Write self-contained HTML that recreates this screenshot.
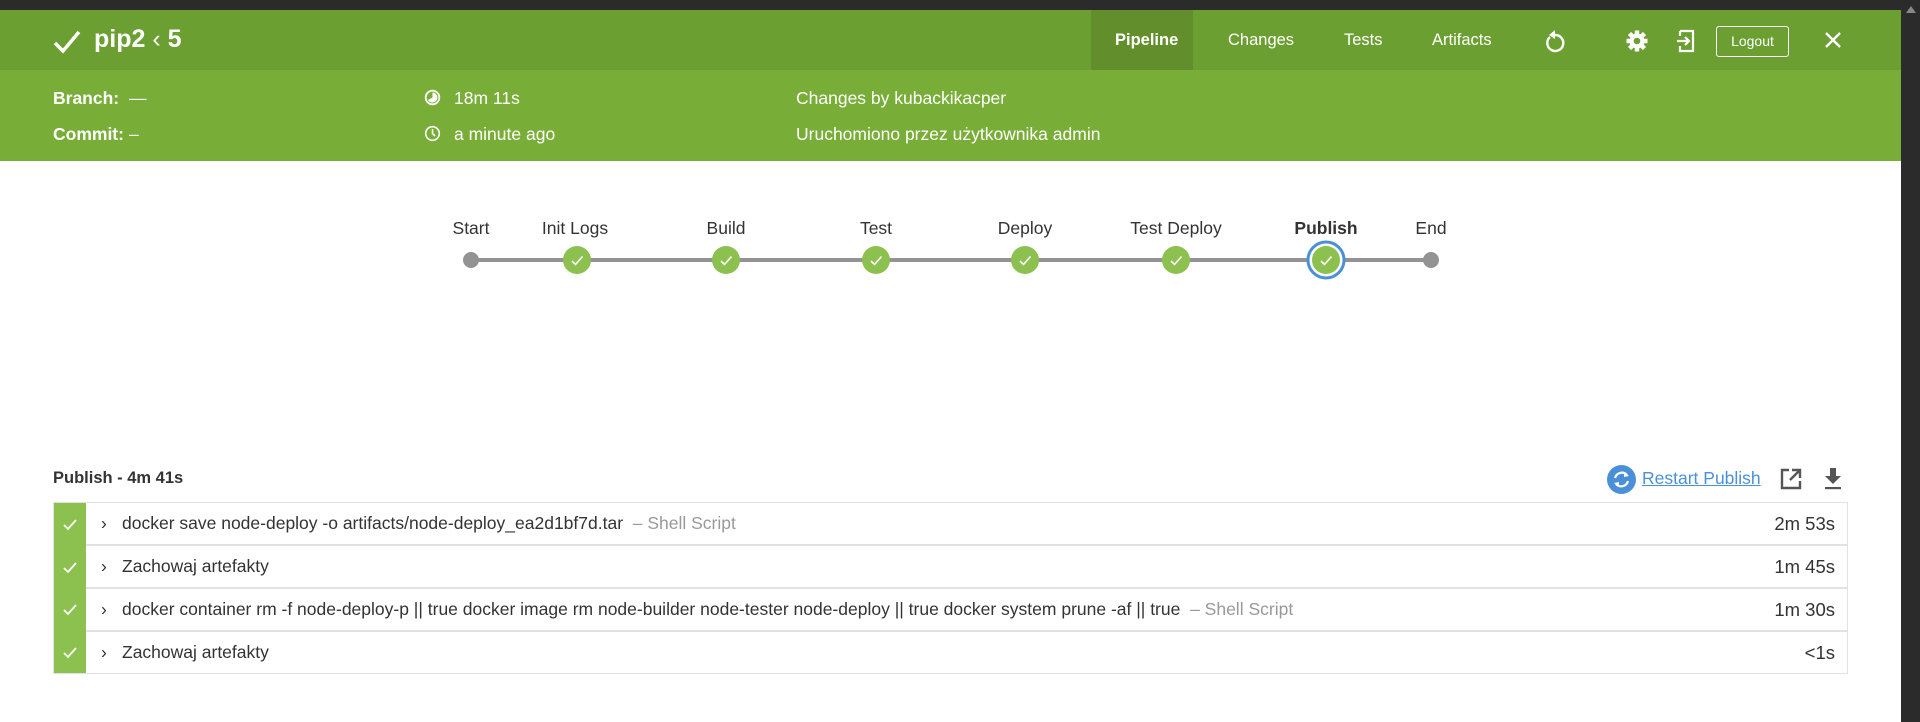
<!DOCTYPE html>
<html><head><meta charset="utf-8"><style>
*{margin:0;padding:0;box-sizing:border-box}
body{width:1920px;height:722px;overflow:hidden;background:#fff;font-family:"Liberation Sans",sans-serif;position:relative;color:#333}
.abs{position:absolute}
#top{left:0;top:0;width:1920px;height:10px;background:#2b2b2b}
#rs{right:0;top:0;width:19px;height:722px;background:#2b2b2b}
#hd{left:0;top:10px;width:1901px;height:60px;background:#6c9f31}
#sub{left:0;top:70px;width:1901px;height:91px;background:#78ae37;color:#fff;font-size:17.5px}
.w{color:#fff}
.tab{top:10px;height:60px;line-height:60px;color:#fff;font-size:16.5px}
.lbl{font-size:17.5px;color:#333;top:218px;transform:translateX(-50%);white-space:nowrap}
.row{left:86px;width:1762px;height:43px;border:1px solid #e2e2e2;border-left:none}
.txt{font-size:17.5px;line-height:43px;color:#333;white-space:nowrap}
.dur{right:85px;font-size:18.5px;line-height:43px;color:#333}
</style></head><body>
<div id="top" class="abs"></div>
<div id="hd" class="abs"></div>
<div id="rs" class="abs"><div style="margin:6px auto 0;width:0;height:0;border-left:5px solid transparent;border-right:5px solid transparent;border-bottom:7px solid #888"></div></div>
<svg class="abs" style="left:52px;top:29px" width="30" height="26" viewBox="0 0 30 26"><path d="M3 14 L11 22 L27 3" stroke="#fff" stroke-width="3.5" fill="none"/></svg>
<div class="abs w" style="left:94px;top:25px;font-size:25px;font-weight:bold">pip2 <span style="font-weight:normal">‹</span> 5</div>
<div class="abs" style="left:1091px;top:10px;width:102px;height:60px;background:#628f2c"></div>
<div class="abs tab" style="left:1115px;font-weight:bold">Pipeline</div>
<div class="abs tab" style="left:1228px">Changes</div>
<div class="abs tab" style="left:1344px">Tests</div>
<div class="abs tab" style="left:1432px">Artifacts</div>
<svg class="abs" style="left:1543px;top:28px" width="24" height="26" viewBox="0 0 24 26"><path d="M7 9 A8 8 0 1 0 12 7" stroke="#fff" stroke-width="2.4" fill="none"/><path d="M12 2 L6 7 L12 11 Z" fill="#fff"/></svg>
<svg class="abs" style="left:1625px;top:29px" width="24" height="24" viewBox="0 0 24 24"><g fill="#fff"><circle cx="12" cy="12" r="7.5"/><g stroke="#fff" stroke-width="4.5"><line x1="12" y1="1.5" x2="12" y2="22.5"/><line x1="1.5" y1="12" x2="22.5" y2="12"/><line x1="4.5" y1="4.5" x2="19.5" y2="19.5"/><line x1="19.5" y1="4.5" x2="4.5" y2="19.5"/></g></g><circle cx="12" cy="12" r="3.3" fill="#6c9f31"/></svg>
<svg class="abs" style="left:1674px;top:28px" width="24" height="26" viewBox="0 0 24 26"><path d="M6 3 H19 V23 H6 V18 M6 8 V3" stroke="#fff" stroke-width="2.2" fill="none"/><path d="M3 13 H15 M11 9 L15 13 L11 17" stroke="#fff" stroke-width="2.2" fill="none"/></svg>
<div class="abs" style="left:1716px;top:26px;width:73px;height:31px;border:1px solid #fff;border-radius:3px;color:#fff;font-size:14px;text-align:center;line-height:29px">Logout</div>
<svg class="abs" style="left:1823px;top:30px" width="20" height="20" viewBox="0 0 20 20"><path d="M3 3 L17 17 M17 3 L3 17" stroke="#fff" stroke-width="2.4"/></svg>
<div id="sub" class="abs">
<div class="abs" style="left:53px;top:18px;font-weight:bold">Branch:</div><div class="abs" style="left:129px;top:18px">—</div>
<div class="abs" style="left:53px;top:54px;font-weight:bold">Commit:</div><div class="abs" style="left:129px;top:54px">–</div>
<svg class="abs" style="left:424px;top:19px" width="17" height="17" viewBox="0 0 17 17"><circle cx="8.5" cy="8.5" r="6.8" stroke="#fff" stroke-width="1.8" fill="none"/><path d="M8.5 3.5 A5 5 0 1 1 4 11 L8.5 8.5Z" fill="#fff"/></svg>
<div class="abs" style="left:454px;top:18px">18m 11s</div>
<svg class="abs" style="left:424px;top:55px" width="17" height="17" viewBox="0 0 17 17"><circle cx="8.5" cy="8.5" r="6.8" stroke="#fff" stroke-width="1.6" fill="none"/><path d="M8.5 4 V8.5 L11 11" stroke="#fff" stroke-width="1.6" fill="none"/></svg>
<div class="abs" style="left:454px;top:54px">a minute ago</div>
<div class="abs" style="left:796px;top:18px">Changes by kubackikacper</div>
<div class="abs" style="left:796px;top:54px">Uruchomiono przez użytkownika admin</div>
</div>
<svg class="abs" style="left:0;top:230px" width="1900" height="60" viewBox="0 230 1900 60">
<line x1="471" y1="260" x2="1431" y2="260" stroke="#949393" stroke-width="4"/>
<circle cx="471" cy="260" r="8" fill="#949393"/><circle cx="1431" cy="260" r="8" fill="#949393"/>
<circle cx="1326" cy="260" r="18" fill="#fff" stroke="#4a90d9" stroke-width="3"/>
<g fill="#8cc04f">
<circle cx="577" cy="260" r="14"/><circle cx="726" cy="260" r="14"/><circle cx="876" cy="260" r="14"/><circle cx="1025" cy="260" r="14"/><circle cx="1176" cy="260" r="14"/><circle cx="1326" cy="260" r="14"/></g>
<g stroke="#fff" stroke-width="1.6" fill="none">
<path d="M572 261 l3.5 3.5 l7 -8"/><path d="M721 261 l3.5 3.5 l7 -8"/><path d="M871 261 l3.5 3.5 l7 -8"/><path d="M1020 261 l3.5 3.5 l7 -8"/><path d="M1171 261 l3.5 3.5 l7 -8"/><path d="M1321 261 l3.5 3.5 l7 -8"/></g>
</svg>
<div class="abs lbl" style="left:471px">Start</div>
<div class="abs lbl" style="left:575px">Init Logs</div>
<div class="abs lbl" style="left:726px">Build</div>
<div class="abs lbl" style="left:876px">Test</div>
<div class="abs lbl" style="left:1025px">Deploy</div>
<div class="abs lbl" style="left:1176px">Test Deploy</div>
<div class="abs lbl" style="left:1326px;font-weight:bold">Publish</div>
<div class="abs lbl" style="left:1431px">End</div>
<div class="abs" style="left:53px;top:469px;font-size:16.5px;font-weight:bold;color:#333">Publish - 4m 41s</div>
<svg class="abs" style="left:1607px;top:465px" width="29" height="29" viewBox="0 0 29 29"><circle cx="14.5" cy="14.5" r="14.5" fill="#4a90d9"/><path d="M8 13 A7 7 0 0 1 20 10 M21 16 A7 7 0 0 1 9 19" stroke="#fff" stroke-width="2.2" fill="none"/><path d="M17 7 L22 11 L17 12Z M12 22 L7 18 L12 17Z" fill="#fff"/></svg>
<div class="abs" style="left:1642px;top:468px;font-size:17.5px;color:#4a90d9;text-decoration:underline">Restart Publish</div>
<svg class="abs" style="left:1779px;top:467px" width="24" height="24" viewBox="0 0 24 24"><path d="M10 3 H3 V21 H21 V14" stroke="#555" stroke-width="2.4" fill="none"/><path d="M13 3 H21 V11 M21 3 L11 13" stroke="#555" stroke-width="2.4" fill="none"/></svg>
<svg class="abs" style="left:1823px;top:467px" width="20" height="24" viewBox="0 0 20 24"><path d="M7 1 H13 V9 H18 L10 17 L2 9 H7Z" fill="#555"/><rect x="2" y="20" width="16" height="2.2" fill="#555"/></svg>
<div class="abs" style="left:53px;top:502px;width:33px;height:172px;background:#8cc04f"></div>
<div class="abs" style="left:53px;top:502px;width:1795px;height:172px;border:1px solid #e2e2e2;pointer-events:none"></div>
<svg class="abs" style="left:53px;top:502px" width="33" height="172" viewBox="0 0 33 172"><g stroke="#fff" stroke-width="1.8" fill="none"><path d="M11 23 l4 4 l8 -9"/><path d="M11 66 l4 4 l8 -9"/><path d="M11 108 l4 4 l8 -9"/><path d="M11 151 l4 4 l8 -9"/></g></svg>
<div class="abs row" style="top:502px"></div><div class="abs row" style="top:545px"></div><div class="abs row" style="top:588px"></div><div class="abs row" style="top:631px"></div>
<div class="abs txt" style="left:101px;top:502px">›</div><div class="abs txt" style="left:101px;top:545px">›</div><div class="abs txt" style="left:101px;top:588px">›</div><div class="abs txt" style="left:101px;top:631px">›</div>
<div class="abs txt" style="left:122px;top:502px">docker save node-deploy -o artifacts/node-deploy_ea2d1bf7d.tar &nbsp;<span style="color:#999">– Shell Script</span></div>
<div class="abs txt" style="left:122px;top:545px">Zachowaj artefakty</div>
<div class="abs txt" style="left:122px;top:588px">docker container rm -f node-deploy-p || true docker image rm node-builder node-tester node-deploy || true docker system prune -af || true &nbsp;<span style="color:#999">– Shell Script</span></div>
<div class="abs txt" style="left:122px;top:631px">Zachowaj artefakty</div>
<div class="abs dur" style="top:502px">2m 53s</div>
<div class="abs dur" style="top:545px">1m 45s</div>
<div class="abs dur" style="top:588px">1m 30s</div>
<div class="abs dur" style="top:631px">&lt;1s</div>
</body></html>
